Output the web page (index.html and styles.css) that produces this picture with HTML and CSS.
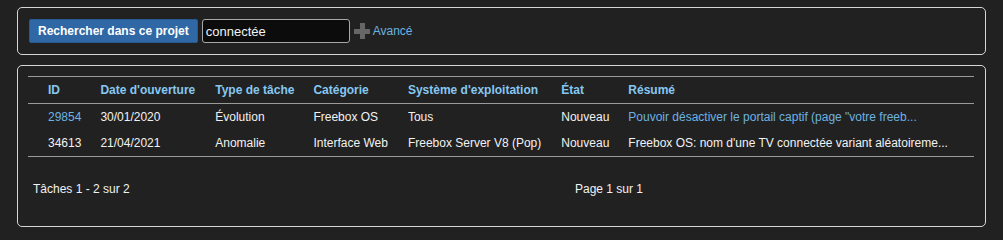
FILE: index.html
```html
<!DOCTYPE html>
<html lang="fr">
<head>
  <meta charset="UTF-8" />
  <title>Recherche</title>
  <link rel="stylesheet" href="styles.css">
</head>
<body>

  <form class="box search">
    <button type="submit">Rechercher dans ce projet</button>
    <input type="text" value="connectée" />
    <span class="plus"></span>
    <a href="#">Avancé</a>
  </form>

  <div class="box results">
    <table>
      <thead>
        <tr>
          <th>ID</th>
          <th>Date d'ouverture</th>
          <th>Type de tâche</th>
          <th>Catégorie</th>
          <th>Système d'exploitation</th>
          <th>État</th>
          <th class="wide">Résumé</th>
        </tr>
      </thead>
      <tbody>
        <tr>
          <td><a href="#">29854</a></td>
          <td>30/01/2020</td>
          <td>Évolution</td>
          <td>Freebox OS</td>
          <td>Tous</td>
          <td>Nouveau</td>
          <td><a href="#">Pouvoir désactiver le portail captif (page "votre freeb...</a></td>
        </tr>
        <tr>
          <td>34613</td>
          <td>21/04/2021</td>
          <td>Anomalie</td>
          <td>Interface Web</td>
          <td>Freebox Server V8 (Pop)</td>
          <td>Nouveau</td>
          <td>Freebox OS: nom d'une TV connectée variant aléatoireme...</td>
        </tr>
      </tbody>
    </table>

    <div class="footer">
      <span>Tâches 1 - 2 sur 2</span>
      <span>Page 1 sur 1</span>
    </div>
  </div>

</body>
</html>
```

FILE: styles.css
```css
body {
  margin: 0;
  padding: 7px 17px;
  background-color: #212121;
  color: #f2f2f2;
  font-family: "Liberation Sans", Arial, sans-serif;
  font-size: 12px;
}
a {
  color: #6cb3e2;
  text-decoration: none;
}
.box {
  border: 1px solid #d6d6d6;
  border-radius: 5px;
}
.search {
  display: flex;
  align-items: center;
  padding: 11px 11px;
}
.search button {
  height: 24px;
  padding: 0 8px;
  background-color: #2f68a5;
  border: 1px solid #285a90;
  border-radius: 2px;
  color: #fff;
  font-family: "Liberation Sans", Arial, sans-serif;
  font-size: 12px;
  font-weight: bold;
}
.search input {
  box-sizing: border-box;
  width: 148px;
  height: 24px;
  margin-left: 4px;
  padding: 0 3px;
  background-color: #0c0c0c;
  border: 1px solid #a8a8a8;
  border-radius: 3px;
  color: #f2f2f2;
  font-family: "Liberation Sans", Arial, sans-serif;
  font-size: 13px;
}
.plus {
  position: relative;
  width: 16px;
  height: 16px;
  margin: 0 3px 0 4px;
}
.plus::before,
.plus::after {
  content: "";
  position: absolute;
  background-color: #666;
}
.plus::before {
  left: 6px;
  top: 0;
  width: 5px;
  height: 16px;
}
.plus::after {
  left: 0;
  top: 6px;
  width: 16px;
  height: 5px;
}
.results {
  margin-top: 10px;
  padding: 10px 11px 29px 10px;
}
table {
  width: 100%;
  border-collapse: collapse;
  border-top: 1px solid #9a9a9a;
  border-bottom: 1px solid #9a9a9a;
}
th, td {
  height: 26px;
  padding: 0 10px;
  text-align: left;
  white-space: nowrap;
}
th:first-child, td:first-child {
  padding-left: 20px;
  padding-right: 9px;
}
th:nth-child(3), td:nth-child(3),
th:nth-child(6), td:nth-child(6) {
  padding-right: 9px;
}
th {
  color: #86c8f2;
  font-weight: bold;
  border-bottom: 1px solid #9a9a9a;
}
th.wide {
  width: 100%;
}
.footer {
  display: grid;
  grid-template-columns: 542px 1fr;
  margin-top: 24px;
  padding-left: 5px;
  line-height: 16px;
}
```
